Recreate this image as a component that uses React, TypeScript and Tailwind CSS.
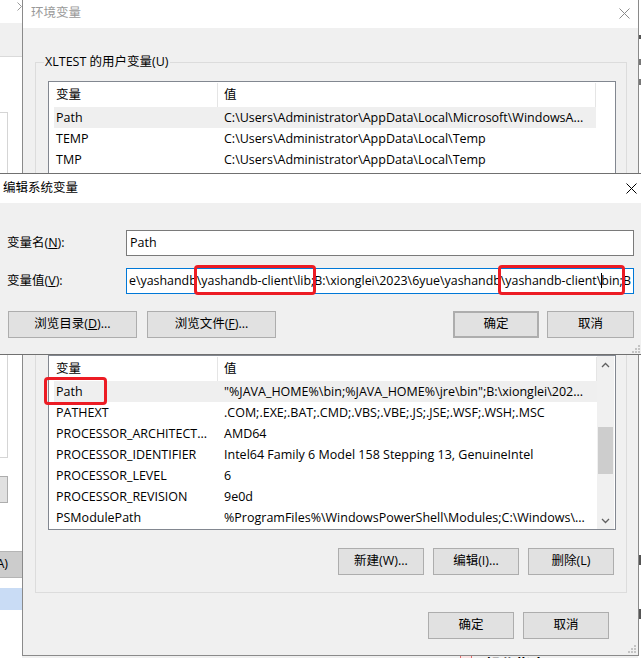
import React from 'react';

const userRows = [
  ['Path', 'C:\\Users\\Administrator\\AppData\\Local\\Microsoft\\WindowsA...'],
  ['TEMP', 'C:\\Users\\Administrator\\AppData\\Local\\Temp'],
  ['TMP', 'C:\\Users\\Administrator\\AppData\\Local\\Temp'],
];

const sysRows = [
  ['Path', '"%JAVA_HOME%\\bin;%JAVA_HOME%\\jre\\bin";B:\\xionglei\\202...'],
  ['PATHEXT', '.COM;.EXE;.BAT;.CMD;.VBS;.VBE;.JS;.JSE;.WSF;.WSH;.MSC'],
  ['PROCESSOR_ARCHITECT...', 'AMD64'],
  ['PROCESSOR_IDENTIFIER', 'Intel64 Family 6 Model 158 Stepping 13, GenuineIntel'],
  ['PROCESSOR_LEVEL', '6'],
  ['PROCESSOR_REVISION', '9e0d'],
  ['PSModulePath', '%ProgramFiles%\\WindowsPowerShell\\Modules;C:\\Windows\\...'],
];

const Chev = ({ down }: { down?: boolean }) => (
  <svg width="9" height="6" viewBox="0 0 9 6" className={down ? 'rotate-180' : ''}>
    <path d="M1 5 L4.5 1.5 L8 5" fill="none" stroke="#606060" strokeWidth="1.3" />
  </svg>
);

const Close = ({ color }: { color: string }) => (
  <svg width="11" height="11" viewBox="0 0 11 11">
    <path d="M0.5 0.5 L10.5 10.5 M10.5 0.5 L0.5 10.5" stroke={color} strokeWidth="1" />
  </svg>
);

const Grip = () => (
  <svg width="8" height="8" viewBox="0 0 8 8">
    <rect x="6" y="0" width="2" height="2" fill="#c4c4c4" />
    <rect x="3" y="3" width="2" height="2" fill="#c4c4c4" />
    <rect x="6" y="3" width="2" height="2" fill="#c4c4c4" />
    <rect x="0" y="6" width="2" height="2" fill="#c4c4c4" />
    <rect x="3" y="6" width="2" height="2" fill="#c4c4c4" />
    <rect x="6" y="6" width="2" height="2" fill="#c4c4c4" />
  </svg>
);

function Btn({ children, className = '' }: { children: React.ReactNode; className?: string }) {
  return (
    <div className={`h-[27px] flex items-center justify-center whitespace-nowrap bg-[#e1e1e1] border border-[#adadad] ${className}`}>
      {children}
    </div>
  );
}

function RedBox({ className }: { className: string }) {
  return <span className={`absolute border-[3px] border-[#ec1c24] rounded-[4px] pointer-events-none ${className}`} />;
}

function ListView({ rows, scroll, mark, className = '' }: { rows: string[][]; scroll?: boolean; mark?: boolean; className?: string }) {
  return (
    <div className={`border border-[#828790] bg-white flex ${className}`}>
      <div className="flex-1 min-w-0 flex flex-col pl-[5px]">
        <div className="h-[25px] shrink-0 flex items-center pt-[1px]">
          <div className="w-[164px] h-full flex items-center pl-[2px] border-r border-[#e5e5e5]">变量</div>
          <div className="flex-1 h-full flex items-center pl-[6px] border-r border-[#e5e5e5]">值</div>
        </div>
        {rows.map(([k, v], i) => (
          <div key={k} className={`h-[21px] shrink-0 flex items-center pt-[1px] ${i === 0 ? 'bg-[#efefef]' : ''}`}>
            <div className="relative w-[164px] pl-[2px] whitespace-nowrap">
              {k}
              {mark && i === 0 && <RedBox className="-left-[10px] -top-[6px] w-[63px] h-[28px]" />}
            </div>
            <div className="flex-1 min-w-0 pl-[6px] whitespace-nowrap overflow-hidden">{v}</div>
          </div>
        ))}
      </div>
      {scroll ? (
        <div className="w-[17px] mr-[1px] bg-[#f0f0f0] flex flex-col">
          <div className="h-[17px] flex items-center justify-center"><Chev /></div>
          <div className="flex-1">
            <div className="mt-[54px] mx-[1px] h-[47px] bg-[#cdcdcd]" />
          </div>
          <div className="h-[17px] flex items-center justify-center"><Chev down /></div>
        </div>
      ) : (
        <div className="w-[19px]" />
      )}
    </div>
  );
}

export default function App() {
  return (
    <div className="relative w-[641px] h-[658px] overflow-hidden bg-[#f0f0f0] text-[12.5px] text-black font-['Open_Sans','Noto_Sans_CJK_SC',sans-serif]">
      {/* window behind, left strip */}
      <div className="absolute left-0 top-0 w-[22px] h-[658px] flex flex-col bg-white">
        <div className="h-[23px] shrink-0 bg-white flex justify-end items-start pt-[2px]">
          <svg width="5" height="9" viewBox="0 0 5 9"><path d="M0.5 0.5 L4.5 4.5 L0.5 8.5" fill="none" stroke="#9a9a9a" strokeWidth="1" /></svg>
        </div>
        <div className="h-[34px] shrink-0 bg-[#f0f0f0] border-b border-[#dadada]" />
        <div className="mt-[55px] w-[8px] h-[346px] shrink-0 bg-white border-y border-r border-[#d5d5d5]" />
        <div className="mt-[18px] w-[8px] h-[27px] shrink-0 bg-[#e1e1e1] border-y border-r border-[#adadad]" />
        <div className="mt-[48px] w-[22px] h-[27px] shrink-0 bg-[#cccccc] border-y border-[#b5b5b5] flex items-center justify-end pr-[14px] overflow-hidden whitespace-nowrap">
          A)
        </div>
        <div className="mt-[10px] w-[22px] h-[22px] shrink-0 bg-[#c9dcf5]" />
      </div>

      {/* window behind, right strip marks */}
      <div className="absolute left-[638px] top-0 w-[3px] h-[658px] bg-white flex flex-col">
        <div className="mt-[35px] h-[4px] w-[3px] bg-[#555]" />
        <div className="mt-[20px] h-[6px] w-[3px] bg-[#777]" />
        <div className="mt-[14px] h-[6px] w-[3px] bg-[#777]" />
        <div className="mt-[470px] h-[10px] w-[3px] bg-[#555]" />
        <div className="mt-[44px] h-[10px] w-[3px] bg-[#555]" />
      </div>

      {/* text peeking below the window */}
      <div className="absolute left-[460px] top-[655px] flex items-start gap-[14px]">
        <div className="w-[12px] h-[12px] border border-[#e56b6b] bg-[#fbe3e3]" />
        <div className="text-[15px] font-bold leading-[20px] -mt-[1px]">操作指南</div>
      </div>

      {/* 环境变量 window */}
      <div className="absolute left-[22px] top-0 w-[617px] h-[656px] border-x border-b border-[#8a8a8a] bg-[#f0f0f0] flex flex-col">
        <div className="h-[28px] shrink-0 bg-white flex items-center justify-between pl-[8px] pr-[8px] pb-[2px]">
          <span className="text-[#999]">环境变量</span>
          <Close color="#8a8a8a" />
        </div>
        <div className="flex flex-col pl-[12px] pr-[11px]">
          <div className="relative mt-[34px] h-[261px] border border-[#dcdcdc] pt-[18px] pl-[12px] pr-[10px]">
            <span className="absolute left-[8px] -top-[9px] px-[1px] leading-[16px] bg-[#f0f0f0]">XLTEST 的用户变量(U)</span>
            <ListView rows={userRows} className="h-[180px] overflow-hidden" />
          </div>
          <div className="relative mt-[13px] h-[257px] border border-[#dcdcdc] pt-[18px] pl-[12px] pr-[12px]">
            <div className="mr-[-2px]">
              <ListView rows={sysRows} scroll mark className="h-[175px]" />
            </div>
            <div className="mt-[18px] flex justify-end gap-[9px]">
              <Btn className="w-[86px]">新建(W)...</Btn>
              <Btn className="w-[86px]">编辑(I)...</Btn>
              <Btn className="w-[86px]">删除(L)</Btn>
            </div>
          </div>
          <div className="mt-[19px] flex justify-end gap-[9px] pr-[18px]">
            <Btn className="w-[86px]">确定</Btn>
            <Btn className="w-[86px]">取消</Btn>
          </div>
        </div>
        <div className="absolute right-[2px] bottom-[2px]"><Grip /></div>
      </div>

      {/* 编辑系统变量 dialog */}
      <div className="absolute left-0 top-[173px] w-[641px] h-[182px] border-y border-[#707070] bg-[#f0f0f0] flex flex-col">
        <div className="h-[29px] shrink-0 bg-white flex items-center justify-between pl-[3px] pr-[4px]">
          <span>编辑系统变量</span>
          <Close color="#000" />
        </div>
        <div className="flex flex-col pl-[7px] pr-[7px]">
          <div className="mt-[27px] flex items-center">
            <div className="w-[119px]">变量名(<u>N</u>):</div>
            <div className="flex-1 h-[26px] bg-white border border-[#7a7a7a] flex items-center pl-[3px]">Path</div>
          </div>
          <div className="mt-[12px] flex items-center">
            <div className="w-[119px]">变量值(<u>V</u>):</div>
            <div className="flex-1 min-w-0 h-[26px] bg-white border border-[#0078d7] flex items-center pl-[2px] overflow-x-clip text-[12.4px]">
              <span className="shrink-0 whitespace-nowrap">
                e\yashandb
                <span className="relative">
                  \yashandb-client\lib;
                  <RedBox className="-left-[3px] -right-[2px] -top-[7px] -bottom-[6px]" />
                </span>
                B:\xionglei\2023\6yue\yashandb
                <span className="relative">
                  \yashandb-client\
                  <span className="inline-block w-px -mr-px h-[15px] bg-black align-[-3px]" />
                  bin;
                  <RedBox className="-left-[3px] -right-[2px] -top-[7px] -bottom-[6px]" />
                </span>
                B
              </span>
            </div>
          </div>
          <div className="mt-[17px] flex items-center">
            <Btn className="w-[129px] ml-[1px]">浏览目录(<u>D</u>)...</Btn>
            <Btn className="w-[129px] ml-[10px]">浏览文件(<u>F</u>)...</Btn>
            <div className="flex-1" />
            <Btn className="w-[86px] border-2 border-[#0078d7]">确定</Btn>
            <Btn className="w-[87px] ml-[8px]">取消</Btn>
          </div>
        </div>
        <div className="absolute right-[1px] bottom-[1px]"><Grip /></div>
      </div>
    </div>
  );
}
